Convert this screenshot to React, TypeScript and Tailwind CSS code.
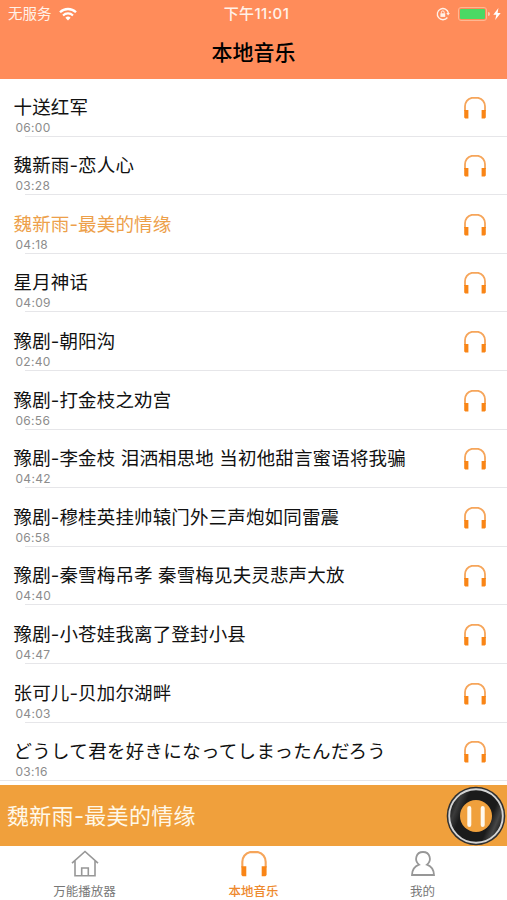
// 本地音乐 — 歌曲列表、迷你播放条与底部导航。

import { clsx } from 'clsx';

interface Track {
  title: string;
  duration: string;
  wide?: boolean;
}

const TRACKS: Track[] = [
  { title: '十送红军', duration: '06:00' },
  { title: '魏新雨-恋人心', duration: '03:28' },
  { title: '魏新雨-最美的情缘', duration: '04:18' },
  { title: '星月神话', duration: '04:09' },
  { title: '豫剧-朝阳沟', duration: '02:40' },
  { title: '豫剧-打金枝之劝宫', duration: '06:56' },
  { title: '豫剧-李金枝 泪洒相思地 当初他甜言蜜语将我骗', duration: '04:42' },
  { title: '豫剧-穆桂英挂帅辕门外三声炮如同雷震', duration: '06:58' },
  { title: '豫剧-秦雪梅吊孝 秦雪梅见夫灵悲声大放', duration: '04:40' },
  { title: '豫剧-小苍娃我离了登封小县', duration: '04:47' },
  { title: '张可儿-贝加尔湖畔', duration: '04:03' },
  { title: 'どうして君を好きになってしまったんだろう', duration: '03:16', wide: true },
];

const CURRENT = 2;

function HeadphonesIcon({ className }: { className?: string }) {
  return (
    <svg viewBox="0 0 24 24" fill="none" className={className}>
      <path
        d="M2 15V10.2C2.2 6 5 2.9 8.8 1.8h6.4C19 2.9 21.8 6 22 10.2V15"
        stroke="#f6a55a"
        strokeWidth="1.8"
      />
      <path d="M1.2 14h4.2v8.5H2.2l-1-1zM22.8 14h-4.2v8.5h3.2l1-1z" fill="#f98516" />
    </svg>
  );
}

function StatusBar() {
  return (
    <div className="grid h-7 grid-cols-3 items-center pl-2 pr-1.5 text-[14.5px] text-[#fff1e8]">
      <div className="flex items-center gap-[7px]">
        <span>无服务</span>
        <svg viewBox="0 0 18 14" className="h-[14px] w-[18px]" fill="none">
          <path d="M1 5.3a11.3 11.3 0 0 1 16 0" stroke="#fff" strokeWidth="2.3" />
          <path d="M4 8.4a7.1 7.1 0 0 1 10 0" stroke="#fff" strokeWidth="2.1" />
          <path d="M6.4 10.7a3.7 3.7 0 0 1 5.2 0L9 13.5z" fill="#fff" />
        </svg>
      </div>
      <div className="pl-1 text-center text-[15px] font-medium tracking-[0.4px]">下午11:01</div>
      <div className="flex items-center justify-end">
        <svg viewBox="0 0 14 14" className="mr-2 h-[14px] w-[14px]" fill="none">
          <path d="M11.4 10.5A5.6 5.6 0 1 1 12.4 6" stroke="#fff1e8" strokeWidth="1.3" />
          <path d="M10.3 6h3.6l-1.8 2.6z" fill="#fff1e8" />
          <path d="M5.4 6.5V5.3a1.4 1.4 0 0 1 2.8 0v1.2" stroke="#fff1e8" />
          <path d="M4.4 6.3h4.8v3.6H4.4z" fill="#fff1e8" />
        </svg>
        <div className="h-[14px] w-[29px] rounded-[3px] border border-[#ffb792] p-px">
          <div className="h-full rounded-[1px] bg-[#4bd964]" />
        </div>
        <div className="ml-px h-1 w-[2px] rounded-r bg-[#ffcdb4]" />
        <svg viewBox="0 0 8 12" className="ml-[3px] h-3 w-2" fill="#fff">
          <path d="M5.4 0 .3 6.8h3L2.2 12l5.5-7H4.6z" />
        </svg>
      </div>
    </div>
  );
}

function TrackRow({ track, active, last }: { track: Track; active: boolean; last: boolean }) {
  return (
    <li className="flex h-[58.6px] flex-col">
      <div className="flex flex-1 items-end justify-between pl-[13.5px] pr-[20px]">
        <div>
          <p
            className={clsx(
              'whitespace-nowrap text-[18.5px] leading-[25px]',
              track.wide ? 'tracking-[0.3px]' : 'tracking-[0.15px]',
              active ? 'text-[#eda04a]' : 'text-[#111]'
            )}
          >
            {track.title}
          </p>
          <p className="pb-px pl-[2px] text-[12px] leading-[15px] tracking-[0.3px] text-[#8c8c8c]">
            {track.duration}
          </p>
        </div>
        <HeadphonesIcon className="mb-4 h-6 w-6" />
      </div>
      <div className={clsx('h-px shrink-0 bg-[#e6e6e9]', !last && 'ml-[25px]')} />
    </li>
  );
}

function PlayerBar() {
  return (
    <div className="flex h-[61px] shrink-0 items-center justify-between bg-[#f0a03c] pl-[7px]">
      <span className="pt-[2px] text-[22px] tracking-[0.3px] text-[#fff8e8]">
        {TRACKS[CURRENT].title}
      </span>
      <svg viewBox="0 0 60 60" className="mr-px h-[60px] w-[60px]">
        <defs>
          <linearGradient id="vinyl" x1="0" y1="0.3" x2="1" y2="0.7">
            <stop offset="0" stopColor="#161616" />
            <stop offset="0.13" stopColor="#3b3b3b" />
            <stop offset="0.25" stopColor="#1b1b1b" />
            <stop offset="0.75" stopColor="#1b1b1b" />
            <stop offset="0.87" stopColor="#464646" />
            <stop offset="1" stopColor="#161616" />
          </linearGradient>
        </defs>
        <circle cx="30" cy="30" r="29.3" fill="#303030" />
        <circle cx="30" cy="30" r="26.8" fill="url(#vinyl)" stroke="#d4d4d4" strokeWidth="1.9" />
        <circle cx="30" cy="30" r="16" fill="#f0a03c" />
        <path d="M23.3 22v17M36.7 22v17" stroke="#fff9ee" strokeWidth="4" strokeLinecap="round" />
      </svg>
    </div>
  );
}

function TabBar() {
  return (
    <nav className="grid h-[54px] shrink-0 grid-cols-3 bg-white text-[12.5px] leading-[18px] text-[#777]">
      <div className="flex flex-col items-center pt-1">
        <svg viewBox="0 0 28 28" className="h-7 w-7" fill="none" stroke="#979797" strokeWidth="1.6">
          <path d="M1 13.2 14 1.5l13 11.7M4 11v14.7h20V11M10.7 25.5V18h6.6v7.5" />
        </svg>
        <span className="mt-[5px]">万能播放器</span>
      </div>
      <div className="flex flex-col items-center pt-1 text-[#ee892d]">
        <HeadphonesIcon className="h-7 w-7" />
        <span className="mt-[5px] font-medium">本地音乐</span>
      </div>
      <div className="flex flex-col items-center pt-1">
        <svg viewBox="0 0 28 28" className="h-7 w-7" fill="none" stroke="#979797" strokeWidth="1.8">
          <path d="M10 14.6C4.8 10.6 7 2 14 2s9.2 8.6 4 12.6c4.4 1.6 6.8 4.8 7 10.4H3c.2-5.6 2.6-8.8 7-10.4z" />
        </svg>
        <span className="mt-[5px]">我的</span>
      </div>
    </nav>
  );
}

export default function App() {
  return (
    <div className="flex h-[900px] w-[507px] flex-col overflow-hidden bg-white font-['Inter','Noto_Sans_CJK_SC',sans-serif]">
      <header className="h-[79px] shrink-0 bg-[#ff8c5a]">
        <StatusBar />
        <h1 className="pt-[9px] text-center text-[21px] leading-8 font-medium text-black">
          本地音乐
        </h1>
      </header>
      <ul className="-mt-[1px] flex-1">
        {TRACKS.map((track, i) => (
          <TrackRow
            key={track.title}
            track={track}
            active={i === CURRENT}
            last={i === TRACKS.length - 1}
          />
        ))}
      </ul>
      <PlayerBar />
      <TabBar />
    </div>
  );
}
